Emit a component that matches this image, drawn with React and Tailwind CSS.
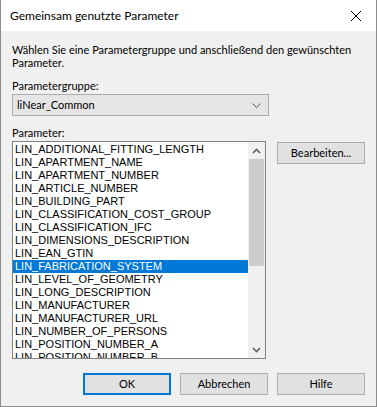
import React from 'react';

const params = [
  'LIN_ADDITIONAL_FITTING_LENGTH',
  'LIN_APARTMENT_NAME',
  'LIN_APARTMENT_NUMBER',
  'LIN_ARTICLE_NUMBER',
  'LIN_BUILDING_PART',
  'LIN_CLASSIFICATION_COST_GROUP',
  'LIN_CLASSIFICATION_IFC',
  'LIN_DIMENSIONS_DESCRIPTION',
  'LIN_EAN_GTIN',
  'LIN_FABRICATION_SYSTEM',
  'LIN_LEVEL_OF_GEOMETRY',
  'LIN_LONG_DESCRIPTION',
  'LIN_MANUFACTURER',
  'LIN_MANUFACTURER_URL',
  'LIN_NUMBER_OF_PERSONS',
  'LIN_POSITION_NUMBER_A',
  'LIN_POSITION_NUMBER_B',
];

const selected = 'LIN_FABRICATION_SYSTEM';

const Button = ({ children, primary, className = '' }) => (
  <button
    className={`h-[22px] w-[88px] bg-[#e1e1e1] text-[11px] text-black flex items-center justify-center ${
      primary ? 'border-2 border-[#0078d7]' : 'border border-[#adadad]'
    } ${className}`}
  >
    {children}
  </button>
);

const App = () => {
  return (
    <div className="w-[377px] h-[407px] flex flex-col bg-[#f0f0f0] border-l border-r border-b border-[#8c8c8c] font-['Lato','Open_Sans',sans-serif] text-black overflow-hidden">
      {/* Title bar */}
      <div className="h-[31px] shrink-0 bg-white flex items-center justify-between pl-[9px] pr-[9px]">
        <span className="text-[12px] leading-none">Gemeinsam genutzte Parameter</span>
        <svg width="12" height="12" viewBox="0 0 12 12" className="mr-[5px]">
          <path d="M1 1 L11 11 M11 1 L1 11" stroke="#000" strokeWidth="1" fill="none" />
        </svg>
      </div>

      {/* Body */}
      <div className="flex-1 pl-[11px] pr-[11px] pt-[12px] text-[11px]">
        <p className="leading-[13px] whitespace-nowrap">
          Wählen Sie eine Parametergruppe und anschließend den gewünschten
          <br />
          Parameter.
        </p>

        <div className="mt-[10px] leading-[13px]">Parametergruppe:</div>
        <div className="mt-[2px] w-[257px] h-[22px] bg-[#e5e5e5] border border-[#adadad] flex items-center justify-between pl-[4px] pr-[7px]">
          <span>liNear_Common</span>
          <svg width="9" height="5" viewBox="0 0 9 5">
            <path d="M0.5 0.5 L4.5 4.5 L8.5 0.5" stroke="#555" strokeWidth="1" fill="none" />
          </svg>
        </div>

        <div className="mt-[10px] leading-[13px]">Parameter:</div>
        <div className="mt-[2px] flex items-start gap-[11px]">
          <div className="w-[255px] h-[218px] bg-white border border-[#828282] flex">
            <div className="flex-1 pt-[1px] overflow-hidden font-['Liberation_Sans',sans-serif] text-[11px]">
              {params.map((p) => (
                <div
                  key={p}
                  className={`h-[13px] leading-[13px] pl-[2px] whitespace-nowrap ${
                    p === selected ? 'bg-[#0078d7] text-white' : ''
                  }`}
                >
                  {p}
                </div>
              ))}
            </div>
            {/* Scrollbar */}
            <div className="w-[17px] bg-[#f0f0f0] flex flex-col">
              <div className="h-[17px] flex items-center justify-center">
                <svg width="9" height="6" viewBox="0 0 9 6">
                  <path d="M1 5 L4.5 1.5 L8 5" stroke="#606060" strokeWidth="1.6" fill="none" />
                </svg>
              </div>
              <div className="flex-1 px-[1px]">
                <div className="h-[107px] bg-[#cdcdcd]" />
              </div>
              <div className="h-[17px] flex items-center justify-center">
                <svg width="9" height="6" viewBox="0 0 9 6">
                  <path d="M1 1 L4.5 4.5 L8 1" stroke="#606060" strokeWidth="1.6" fill="none" />
                </svg>
              </div>
            </div>
          </div>
          <Button className="mt-[1px] w-[87px]">Bearbeiten...</Button>
        </div>

        <div className="mt-[14px] flex justify-end gap-[9px]">
          <Button primary>OK</Button>
          <Button>Abbrechen</Button>
          <Button>Hilfe</Button>
        </div>
      </div>
    </div>
  );
};

export default App;
